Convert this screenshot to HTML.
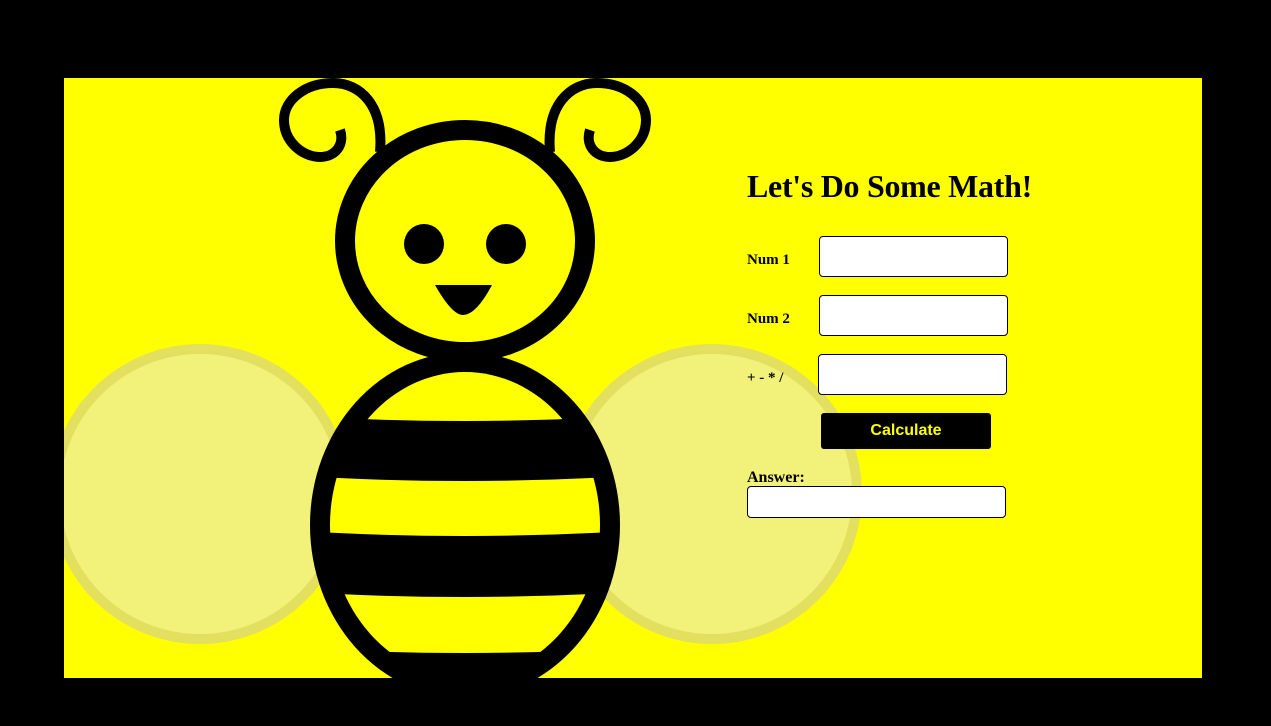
<!DOCTYPE html>
<html><head><meta charset="utf-8"><style>
html,body{margin:0;padding:0;background:#000;width:1271px;height:726px;overflow:hidden}
#panel{position:absolute;left:64px;top:78px;width:1138px;height:600px;background:#ffff00;overflow:hidden}
svg{position:absolute;left:-64px;top:-78px}
.f{position:absolute;font-family:"Liberation Serif",serif;font-weight:bold;color:#000}
.in{position:absolute;background:#fff;border:1px solid #000;border-radius:4px;box-sizing:border-box}
</style></head><body>
<div id="panel">
<svg width="1271" height="726" viewBox="0 0 1271 726">
<defs><clipPath id="ib"><ellipse cx="465" cy="525" rx="135" ry="153"/></clipPath></defs>
<circle cx="200" cy="494" r="145" fill="#f2f27a" stroke="#e3e060" stroke-width="10"/>
<circle cx="712" cy="494" r="145" fill="#f2f27a" stroke="#e3e060" stroke-width="10"/>
<path d="M380,152 C384,105 360,83 333,83 C305,83 284,100 284,120 C284,142 303,157 320,157 C335,157 345,145 340,130" fill="none" stroke="#000" stroke-width="10"/>
<path d="M550,152 C546,105 570,83 597,83 C625,83 646,100 646,120 C646,142 627,157 610,157 C595,157 585,145 590,130" fill="none" stroke="#000" stroke-width="10"/>
<ellipse cx="465" cy="525" rx="155" ry="173" fill="#000"/>
<g clip-path="url(#ib)" fill="#ffff00">
<path d="M300,360 H630 V416 Q465,426 300,416 Z"/>
<path d="M300,476 Q465,486 630,476 V531 Q465,541 300,531 Z"/>
<path d="M300,592 Q465,602 630,592 V648 Q465,658 300,648 Z"/>
</g>
<ellipse cx="465" cy="241" rx="120" ry="111" fill="#ffff00" stroke="#000" stroke-width="20"/>
<circle cx="424" cy="244" r="20" fill="#000"/>
<circle cx="506" cy="244" r="20" fill="#000"/>
<path d="M435,285 H492 Q476,315 463,315 Q452,315 435,285 Z" fill="#000"/>
</svg>
<div class="f" style="left:683px;top:90px;font-size:32px;letter-spacing:-0.3px;white-space:nowrap">Let's Do Some Math!</div>
<div class="f" style="left:683px;top:174px;font-size:15px">Num 1</div>
<div class="in" style="left:755px;top:158px;width:189px;height:41px"></div>
<div class="f" style="left:683px;top:233px;font-size:15px">Num 2</div>
<div class="in" style="left:755px;top:217px;width:189px;height:41px"></div>
<div class="f" style="left:683px;top:292px;font-size:15px">+ - * /</div>
<div class="in" style="left:754px;top:276px;width:189px;height:41px"></div>
<div style="position:absolute;left:757px;top:335px;width:170px;height:36px;background:#000;border-radius:3px;color:#ffff00;font-family:'Liberation Sans',sans-serif;font-size:16px;line-height:36px;text-align:center;font-weight:bold">Calculate</div>
<div class="f" style="left:683px;top:391px;font-size:16px">Answer:</div>
<div class="in" style="left:683px;top:408px;width:259px;height:32px"></div>
</div>
</body></html>
